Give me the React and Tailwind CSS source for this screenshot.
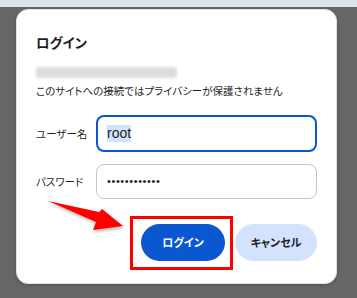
export default function App() {
  return (
    <div
      className="relative w-[357px] h-[298px] overflow-hidden bg-[#666666] font-['Noto_Sans_CJK_JP','Noto_Sans',sans-serif]"
      style={{ fontFeatureSettings: '"palt" 1' }}
    >
      {/* browser strip */}
      <div className="h-[7px] bg-[#dfe3eb]" />

      <div className="pl-[16px] pr-[20px] pt-[2px]">
        {/* Dialog */}
        <div className="h-[275px] rounded-[12px] bg-white border border-[#e3e3e3] shadow-[0_1px_3px_rgba(0,0,0,0.2)] px-[19px] pt-[22px]">
          <h2 className="text-[13.5px] leading-[20px] font-bold text-[#1f1f1f]">ログイン</h2>

          <div className="mt-[15px] h-[11px] w-[141px] rounded-[3px] bg-[#dcdcdc] blur-[1.5px]" />
          <p className="mt-[4px] text-[10.5px] leading-[18px] text-[#1f1f1f]">
            このサイトへの接続ではプライバシーが保護されません
          </p>

          {/* Username */}
          <div className="mt-[15px] flex items-center">
            <label className="w-[60px] text-[10.5px] text-[#1f1f1f]">ユーザー名</label>
            <div className="flex-1 h-[37px] rounded-[8px] border-2 border-[#0b57d0] flex items-center pl-[9px]">
              <span className="bg-[#d3e3fd] text-[14px] leading-[17px] text-[#1f1f1f] font-['Liberation_Sans',Arial,sans-serif]">
                root
              </span>
            </div>
          </div>

          {/* Password */}
          <div className="mt-[12px] flex items-center">
            <label className="w-[60px] text-[10.5px] text-[#1f1f1f]">パスワード</label>
            <div className="flex-1 h-[35px] rounded-[8px] border border-[#c7c7c7] flex items-center pl-[10px]">
              <span className="text-[11px] tracking-[0.6px] text-[#1f1f1f] font-['Liberation_Sans',Arial,sans-serif]">
                ••••••••••••
              </span>
            </div>
          </div>

          {/* Buttons */}
          <div className="mt-[25px] flex justify-end gap-[10px]">
            <div className="relative">
              <button className="w-[84px] h-[37px] rounded-full bg-[#0b57d0] text-white text-[11px] font-bold">
                ログイン
              </button>
              <div className="absolute left-[-11px] top-[-8px] w-[103px] h-[54px] border-[3px] border-[#ff0000]" />
            </div>
            <button className="w-[82px] h-[37px] rounded-full bg-[#d3e3fd] text-[#1f1f1f] text-[11px] font-bold">
              キャンセル
            </button>
          </div>
        </div>
      </div>

      {/* annotation arrow */}
      <svg className="absolute left-0 top-0" width="357" height="298" viewBox="0 0 357 298">
        <defs>
          <filter id="sh" x="-20%" y="-20%" width="140%" height="140%">
            <feDropShadow dx="1" dy="2" stdDeviation="1.5" floodColor="#000" floodOpacity="0.3" />
          </filter>
        </defs>
        <polygon
          points="48,201 99,212 102,209 123,226 93,230 96,222"
          fill="#ff0000"
          filter="url(#sh)"
        />
      </svg>
    </div>
  );
}
